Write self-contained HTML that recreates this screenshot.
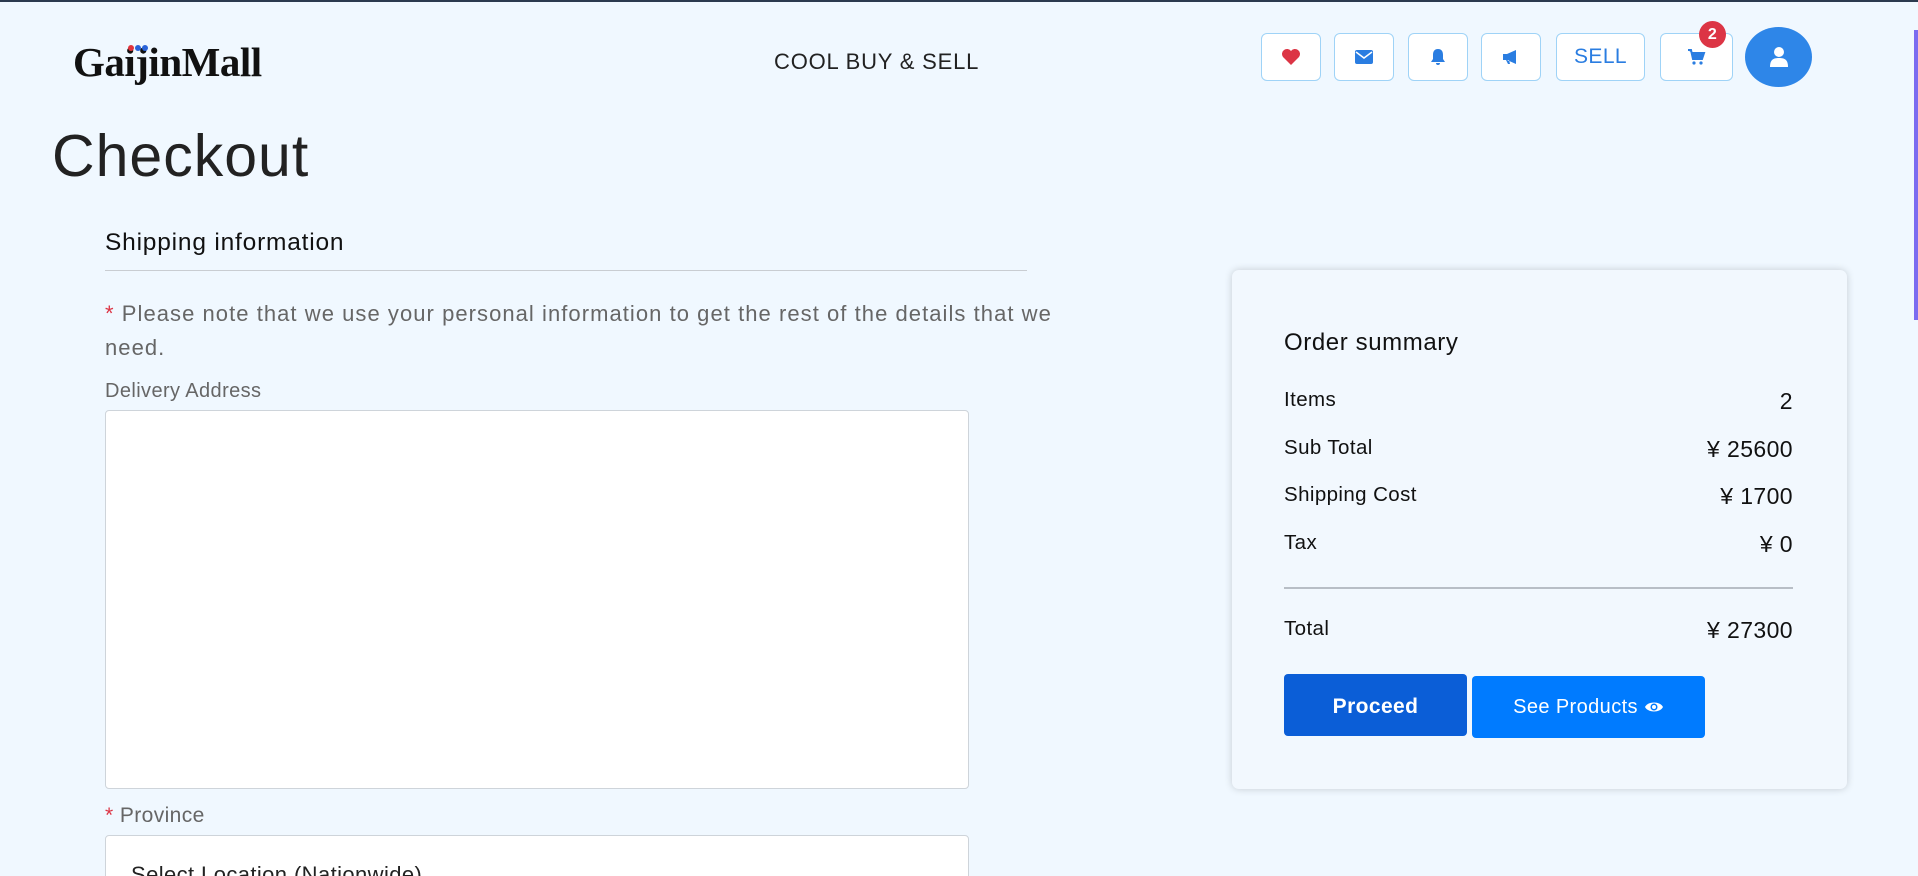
<!DOCTYPE html>
<html><head><meta charset="utf-8"><style>
*{box-sizing:border-box;margin:0;padding:0}
html,body{width:1918px;height:876px;overflow:hidden}
body{background:#f0f8ff;font-family:"Liberation Sans",sans-serif;color:#212529;position:relative;letter-spacing:0.4px}
.abs{position:absolute}
.topbar{left:0;top:0;width:1918px;height:2px;background:#2b3a4f}
.logo{left:73px;top:38px;font-family:"Liberation Serif",serif;font-weight:bold;font-size:41px;letter-spacing:-0.5px;color:#111}
.tag{left:774px;top:49px;font-size:22px;color:#222;letter-spacing:0.8px}
.ib{top:33px;height:48px;border:1px solid #9fd3f7;border-radius:6px;background:#fff;display:flex;align-items:center;justify-content:center;color:#2a7de1}
.badge{left:1699px;top:21px;width:27px;height:27px;border-radius:50%;background:#dc3545;color:#fff;font-weight:bold;font-size:16px;display:flex;align-items:center;justify-content:center}
.av{left:1745px;top:27px;width:67px;height:60px;border-radius:50%;background:#2e86e8;display:flex;align-items:center;justify-content:center}
h1{position:absolute;left:52px;top:122px;font-size:59px;font-weight:normal;color:#222;letter-spacing:1px}
.lbl{color:#666;font-size:20px}
.card{left:1232px;top:270px;width:615px;height:519px;border-radius:7px;background:#f2f8fe;box-shadow:0 0 8px rgba(0,0,0,.18)}
.row{position:absolute;left:52px;width:509px;display:flex;justify-content:space-between;font-size:20.5px;color:#111}
.row span:last-child{font-size:23px}
</style></head><body>
<div class="abs topbar"></div>
<div class="abs" style="right:0;top:30px;width:4px;height:290px;background:#7b6cf0"></div>
<div class="abs logo">GaijinMall</div>
<div class="abs" style="left:128px;top:45px;width:6px;height:6px;border-radius:50%;background:#e0343c"></div>
<div class="abs" style="left:135px;top:45px;width:6px;height:6px;border-radius:50%;background:#2a63d8"></div>
<div class="abs" style="left:142px;top:45px;width:6px;height:6px;border-radius:50%;background:#2a63d8"></div>
<div class="abs tag">COOL BUY &amp; SELL</div>
<div class="abs ib" style="left:1261px;width:60px"><svg width="20" height="18" viewBox="0 0 20 18"><path d="M10 17 L2 9 A4.5 4.5 0 0 1 10 3 A4.5 4.5 0 0 1 18 9 Z" fill="#dc3545"/></svg></div>
<div class="abs ib" style="left:1334px;width:60px"><svg width="18" height="14" viewBox="0 0 18 14"><rect width="18" height="14" rx="2" fill="#2a7de1"/><path d="M1 2 L9 8 L17 2" stroke="#fff" stroke-width="1.5" fill="none"/></svg></div>
<div class="abs ib" style="left:1408px;width:60px"><svg width="16" height="18" viewBox="0 0 16 18"><path d="M8 1 C4 1 3 4 3 7 V11 L1 14 H15 L13 11 V7 C13 4 12 1 8 1Z M6 15 A2 2 0 0 0 10 15Z" fill="#2a7de1"/></svg></div>
<div class="abs ib" style="left:1481px;width:60px"><svg width="20" height="16" viewBox="0 0 20 16"><path d="M2 5 H6 L15 1 V15 L6 11 H2Z M5 11 L7 15 H9 L8 11Z" fill="#2a7de1"/></svg></div>
<div class="abs ib" style="left:1556px;width:89px;font-size:21px">SELL</div>
<div class="abs ib" style="left:1660px;width:73px"><svg width="18" height="16" viewBox="0 0 18 16"><path d="M0 1 H3 L5 10 H14 L16 4 H4" stroke="#2a7de1" stroke-width="2" fill="#2a7de1"/><circle cx="6" cy="14" r="1.6" fill="#2a7de1"/><circle cx="13" cy="14" r="1.6" fill="#2a7de1"/></svg></div>
<div class="abs badge">2</div>
<div class="abs av"><svg width="20" height="22" viewBox="0 0 20 22"><circle cx="10" cy="6" r="5" fill="#fff"/><path d="M1 21 C1 14 4 12 10 12 C16 12 19 14 19 21Z" fill="#fff"/></svg></div>
<h1>Checkout</h1>
<div class="abs" style="left:105px;top:229px;font-size:24.5px;color:#111;letter-spacing:0.8px">Shipping information</div>
<div class="abs" style="left:105px;top:270px;width:922px;height:1px;background:#c9cdd2"></div>
<div class="abs lbl" style="left:105px;top:297px;width:1000px;font-size:22px;line-height:34px;letter-spacing:1.05px"><span style="color:#dc3545">*</span> Please note that we use your personal information to get the rest of the details that we need.</div>
<div class="abs lbl" style="left:105px;top:380px">Delivery Address</div>
<div class="abs" style="left:105px;top:410px;width:864px;height:379px;background:#fff;border:1px solid #ced4da;border-radius:4px"></div>
<div class="abs lbl" style="left:105px;top:804px;font-size:21px"><span style="color:#dc3545">*</span> Province</div>
<div class="abs" style="left:105px;top:835px;width:864px;height:60px;background:#fff;border:1px solid #ced4da;border-radius:4px"></div>
<div class="abs" style="left:131px;top:862px;font-size:22px;color:#222">Select Location (Nationwide)</div>
<div class="abs card">
<div class="abs" style="left:52px;top:59px;font-size:24px;color:#111;letter-spacing:0.6px">Order summary</div>
<div class="row" style="top:118px"><span>Items</span><span>2</span></div>
<div class="row" style="top:166px"><span>Sub Total</span><span>¥ 25600</span></div>
<div class="row" style="top:213px"><span>Shipping Cost</span><span>¥ 1700</span></div>
<div class="row" style="top:261px"><span>Tax</span><span>¥ 0</span></div>
<div class="abs" style="left:52px;top:317px;width:509px;height:2px;background:#b8bec6"></div>
<div class="row" style="top:347px"><span>Total</span><span>¥ 27300</span></div>
<div class="abs" style="left:52px;top:404px;width:183px;height:62px;background:#0b5ed7;border-radius:4px;color:#fff;font-weight:bold;font-size:21px;display:flex;align-items:center;justify-content:center;padding-top:4px">Proceed</div>
<div class="abs" style="left:240px;top:406px;width:233px;height:62px;background:#007bff;border-radius:4px;color:#fff;font-size:20px;display:flex;align-items:center;justify-content:center">See Products&nbsp;<svg width="20" height="14" viewBox="0 0 20 14"><path d="M1 7 C4 1 16 1 19 7 C16 13 4 13 1 7Z" fill="#fff"/><circle cx="10" cy="7" r="3.5" fill="#007bff"/><circle cx="10" cy="7" r="2" fill="#fff"/></svg></div>
</div>
</body></html>
